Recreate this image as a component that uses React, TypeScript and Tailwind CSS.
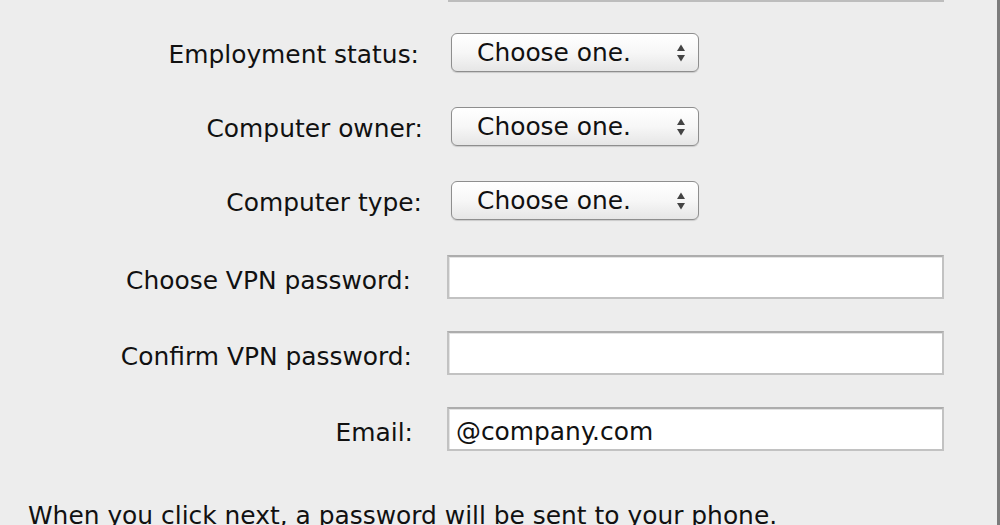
import React from "react";

const font = { fontFamily: '"DejaVu Sans", "Liberation Sans", sans-serif' };

function Arrows() {
  return (
    <svg width="10" height="20" viewBox="0 0 10 20" className="absolute right-[12px] top-[9px]">
      <polygon points="5,1.5 9,8 1,8" fill="#444" />
      <polygon points="1,12 9,12 5,18.5" fill="#444" />
    </svg>
  );
}

function SelectRow({ label, lw }: { label: string; lw: string }) {
  return (
    <div className="flex items-center h-[39px]">
      <div className={`${lw} shrink-0 text-right whitespace-nowrap pt-[5px]`}>{label}</div>
      <div className="absolute left-[451px] w-[248px] h-[39px] rounded-[6px] border border-[#8e8e8e] bg-gradient-to-b from-white via-[#f7f7f7] to-[#e6e6e6] shadow-[0_1px_1px_rgba(0,0,0,0.15)] flex items-center">
        <span className="pl-[25px] pt-[1px]">Choose one.</span>
        <Arrows />
      </div>
    </div>
  );
}

function InputRow({ label, lw, value }: { label: string; lw: string; value?: string }) {
  return (
    <div className="flex items-center h-[44px]">
      <div className={`${lw} shrink-0 text-right whitespace-nowrap pt-[7px]`}>{label}</div>
      <div className="absolute left-[447px] w-[497px] h-[44px] border-2 border-[#c2c2c2] border-t-[#adadad] bg-white flex items-center shadow-[inset_1px_1px_0_#e4e4e4]">
        {value && <span className="pl-[7px] pt-[5px]">{value}</span>}
      </div>
    </div>
  );
}

export default function App() {
  return (
    <div
      className="w-[1000px] h-[525px] overflow-hidden bg-[#ededed] text-[#111] text-[24.9px] border-r-[3px] border-[#7c7c7c] flex flex-col"
      style={font}
    >
      <div className="ml-[448px] w-[496px] h-[3px] border-x-2 border-b-2 border-[#bdbdbd] bg-white" />
      <div className="mt-[31px] flex flex-col gap-[35px]">
        <div className="relative"><SelectRow label="Employment status:" lw="w-[419px]" /></div>
        <div className="relative"><SelectRow label="Computer owner:" lw="w-[423px]" /></div>
        <div className="relative"><SelectRow label="Computer type:" lw="w-[422px]" /></div>
      </div>
      <div className="mt-[35px] flex flex-col gap-[32px]">
        <div className="relative"><InputRow label="Choose VPN password:" lw="w-[411px]" /></div>
        <div className="relative"><InputRow label="Confirm VPN password:" lw="w-[412px]" /></div>
        <div className="relative"><InputRow label="Email:" lw="w-[413px]" value="@company.com" /></div>
      </div>
      <div className="mt-[46px] pl-[28px] whitespace-nowrap">
        When you click next, a password will be sent to your phone.
      </div>
    </div>
  );
}
